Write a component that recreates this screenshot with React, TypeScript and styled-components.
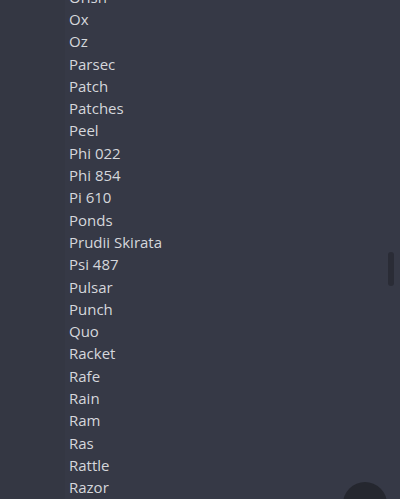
import React from "react";
import styled, { createGlobalStyle } from "styled-components";

const Global = createGlobalStyle`
  html, body { margin: 0; padding: 0; background: #363946; }
  body { overflow: hidden; }
`;

const Screen = styled.div`
  position: relative;
  width: 400px;
  height: 499px;
  overflow: hidden;
  background: #363946;
  display: flex;
`;

const Gutter = styled.div`
  width: 65px;
  flex: none;
  background: #343743;
`;

const List = styled.ul`
  list-style: none;
  margin: -14.3px 0 0 0;
  padding: 0 0 0 4px;
  flex: 1;
  display: flex;
  flex-direction: column;
`;

const Item = styled.li`
  font-family: "Open Sans", "Noto Sans", sans-serif;
  font-size: 15px;
  font-weight: 500;
  line-height: 22.3px;
  height: 22.3px;
  color: #d5d7dc;
  white-space: nowrap;
`;

const Thumb = styled.div`
  position: absolute;
  left: 388px;
  top: 252px;
  width: 6px;
  height: 34px;
  border-radius: 3px;
  background: #2a2c36;
`;

const Fab = styled.div`
  position: absolute;
  left: 343px;
  top: 482px;
  width: 44px;
  height: 44px;
  border-radius: 50%;
  background: #25272f;
`;

const names = [
  "Orish", "Ox", "Oz", "Parsec", "Patch", "Patches", "Peel", "Phi 022", "Phi 854",
  "Pi 610", "Ponds", "Prudii Skirata", "Psi 487", "Pulsar", "Punch", "Quo",
  "Racket", "Rafe", "Rain", "Ram", "Ras", "Rattle", "Razor",
];

export default function App() {
  return (
    <Screen>
      <Global />
      <Gutter />
      <List>
        {names.map((n) => (
          <Item key={n}>{n}</Item>
        ))}
      </List>
      <Thumb />
      <Fab />
    </Screen>
  );
}
